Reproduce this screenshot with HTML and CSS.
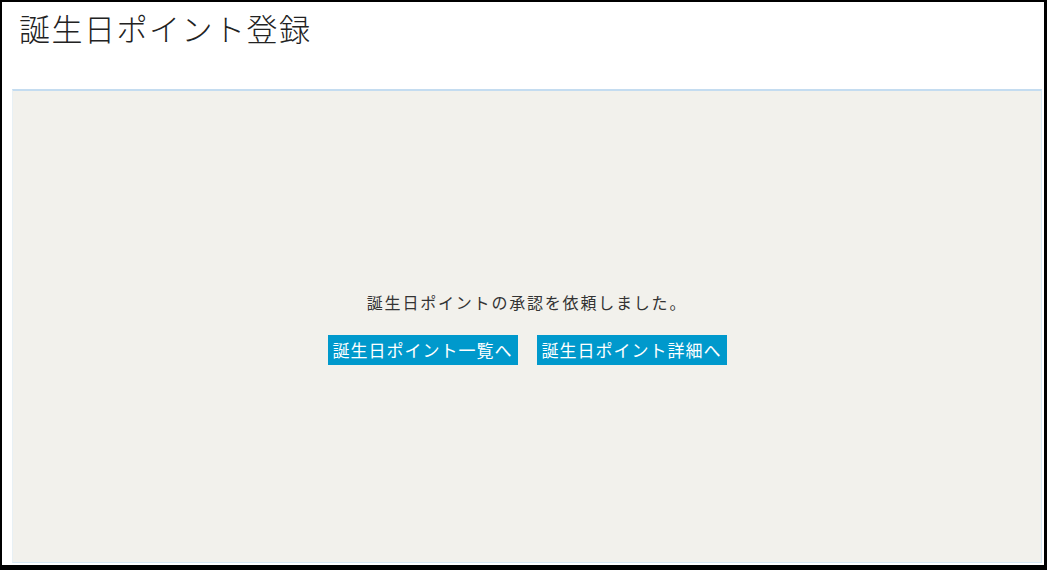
FILE: index.html
```html
<!DOCTYPE html>
<html lang="ja">

<head>
    <meta charset="utf-8">
    <meta name="viewport" content="width=device-width, initial-scale=1.0">
    <title>誕生日ポイント登録</title>

    <link rel="stylesheet" href="styles.css">

</head>

<body>

    <div class="frame">

        <header class="page_head">
            <h1>誕生日ポイント登録</h1>
        </header>

        <main class="panel">
            <div class="result">
                <p class="message">誕生日ポイントの承認を依頼しました。</p>
                <div class="actions">
                    <a class="btn" href="#">誕生日ポイント一覧へ</a>
                    <a class="btn" href="#">誕生日ポイント詳細へ</a>
                </div>
            </div>
        </main>

    </div>

</body></html>
```

FILE: styles.css
```css
html,
body {
    margin: 0;
    height: 100%;
}

body {
    font-family: "Noto Sans CJK JP", "Noto Sans", sans-serif;
    color: #333;
    background-color: #fff;
}

.frame {
    box-sizing: border-box;
    height: 100%;
    display: flex;
    flex-direction: column;
    border-style: solid;
    border-color: #000;
    border-width: 2px 3px 5px 2px;
    padding: 0 2px 2px 10px;
}

.page_head {
    height: 87px;
    flex: none;
}

h1 {
    margin: 0;
    padding: 6px 0 0 7px;
    font-size: 31px;
    font-weight: 300;
    letter-spacing: 1.5px;
    line-height: 40px;
    color: #222;
}

.panel {
    flex: 1;
    display: flex;
    align-items: center;
    justify-content: center;
    background-color: #f2f1ec;
    border-top: 2px solid #c4dcf0;
    border-left: 1px solid #e8f0f4;
    border-right: 1px solid #d6e8f4;
    border-bottom: 1px solid #d6e8f4;
}

.result {
    text-align: center;
    margin-top: 2px;
}

.message {
    margin: 0 0 22px;
    font-size: 16px;
    letter-spacing: 1.8px;
    line-height: 22px;
    color: #333;
}

.actions {
    display: flex;
    justify-content: center;
    gap: 19px;
}

.btn {
    display: block;
    width: 190px;
    height: 30px;
    line-height: 30px;
    background-color: #0099cc;
    color: #fff;
    text-decoration: none;
    font-size: 17px;
    letter-spacing: 1px;
    text-align: center;
}
```
